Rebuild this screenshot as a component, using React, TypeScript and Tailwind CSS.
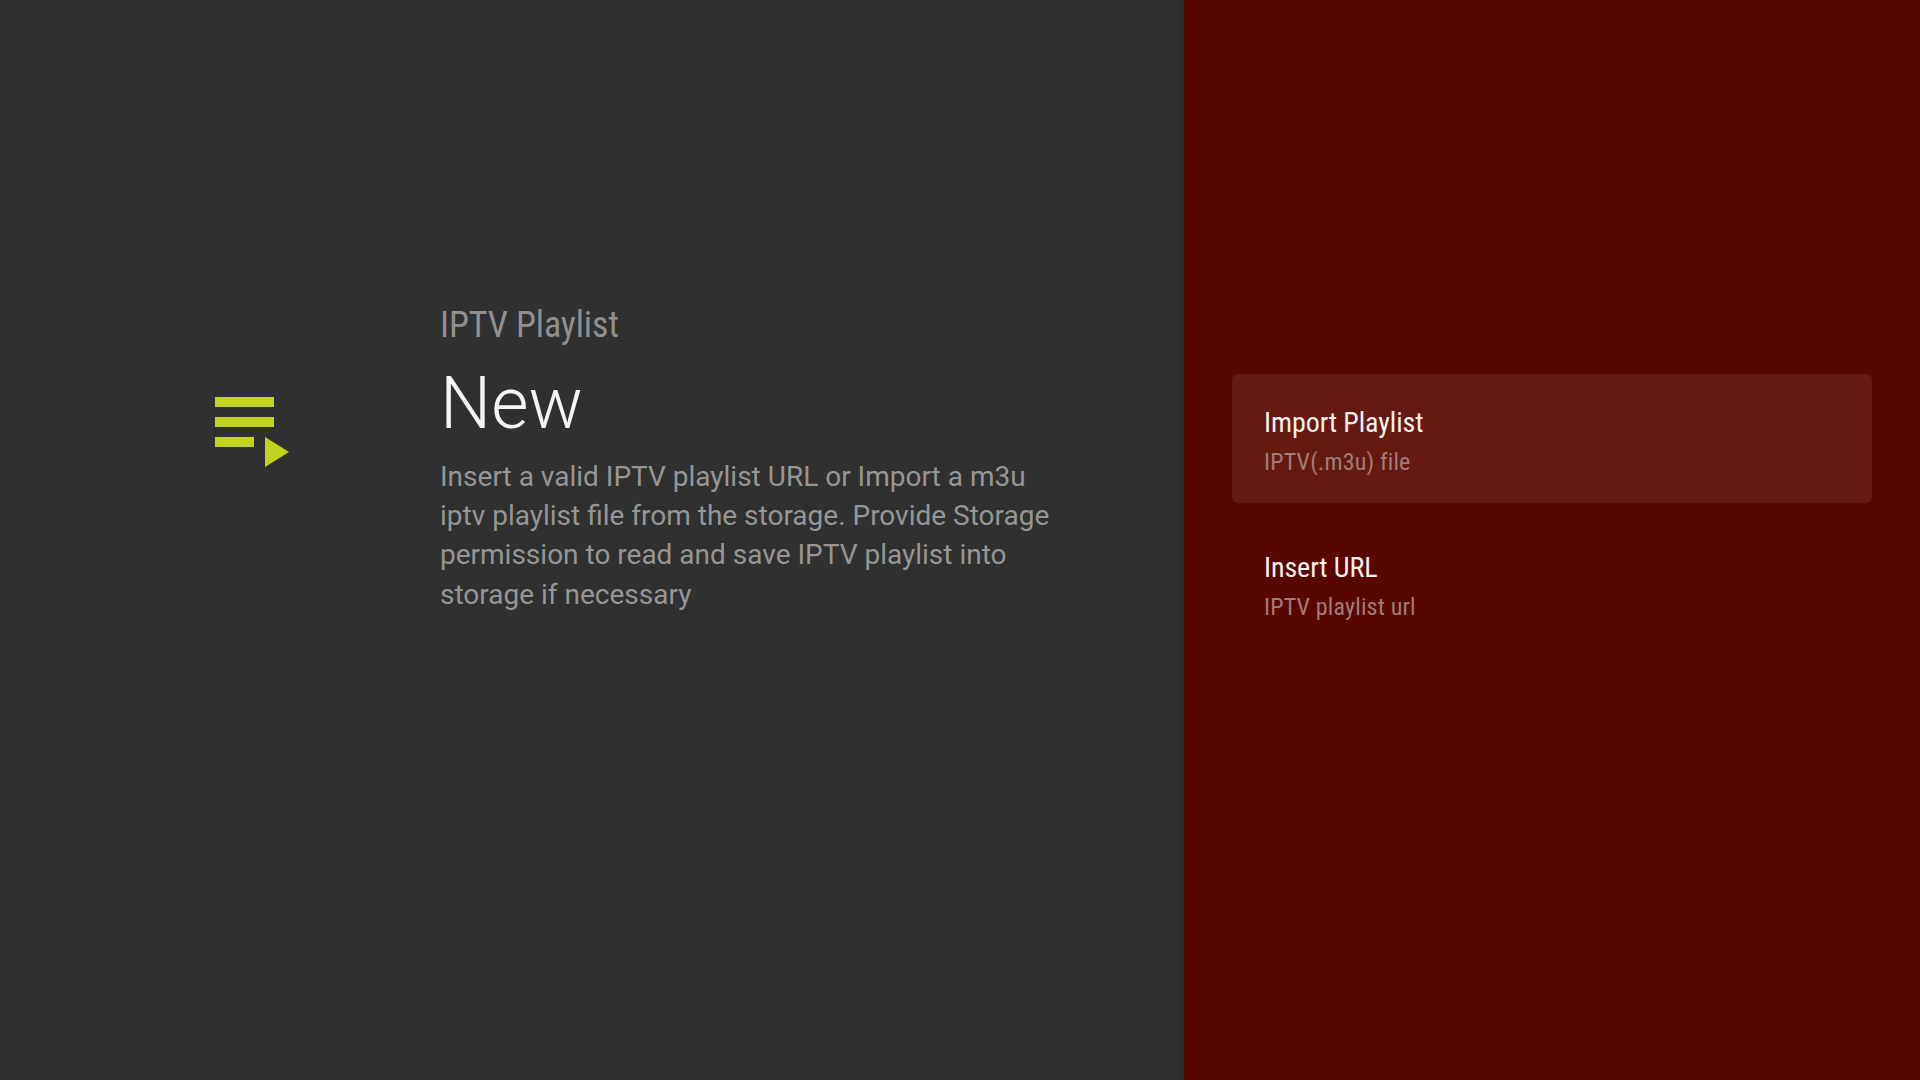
export default function App() {
  return (
    <div className="flex h-[1080px] w-[1920px] overflow-hidden bg-[#303030] font-['Roboto',sans-serif]">
      <div className="flex w-[1184px] shrink-0 items-start pl-[215px] pt-[300px] shadow-[inset_-12px_0_12px_-12px_rgba(0,0,0,0.3)]">
        <div className="mt-[97px] w-[74px] shrink-0">
          <svg width="74" height="70" viewBox="0 0 74 70" fill="#c1d321">
            <rect x="0" y="0" width="59" height="10" />
            <rect x="0" y="20" width="59" height="10" />
            <rect x="0" y="40" width="39" height="10" />
            <polygon points="50,40 74,55 50,70" />
          </svg>
        </div>
        <div className="ml-[151px] w-[620px]">
          <div className="text-[36px] leading-[50px] tracking-[-0.1px] [font-stretch:75%] text-[#8f8f8f]">IPTV Playlist</div>
          <div className="mt-[8px] text-[72px] font-light leading-[92px] text-[#f5f5f5]">New</div>
          <div className="mt-[7px] text-[28px] leading-[39.2px] text-[#969696]">
            Insert a valid IPTV playlist URL or Import a m3u iptv playlist file from the storage. Provide Storage permission to read and save IPTV playlist into storage if necessary
          </div>
        </div>
      </div>
      <div className="flex flex-1 flex-col bg-[#570700] pl-[48px] pr-[48px] pt-[374px]">
        <div className="h-[129px] rounded-[6px] bg-[#651a11] px-[32px] pt-[31px]">
          <div className="text-[28px] leading-[36px] tracking-[-0.08px] [font-stretch:75%] text-[#f7f0ef]">Import Playlist</div>
          <div className="mt-[5px] text-[24px] leading-[32px] tracking-[0.18px] [font-stretch:75%] text-[#a27c78]">IPTV(.m3u) file</div>
        </div>
        <div className="mt-[16px] h-[129px] rounded-[6px] px-[32px] pt-[31px]">
          <div className="text-[28px] leading-[36px] tracking-[-0.08px] [font-stretch:75%] text-[#f7f0ef]">Insert URL</div>
          <div className="mt-[5px] text-[24px] leading-[32px] tracking-[0.18px] [font-stretch:75%] text-[#a27c78]">IPTV playlist url</div>
        </div>
      </div>
    </div>
  );
}
